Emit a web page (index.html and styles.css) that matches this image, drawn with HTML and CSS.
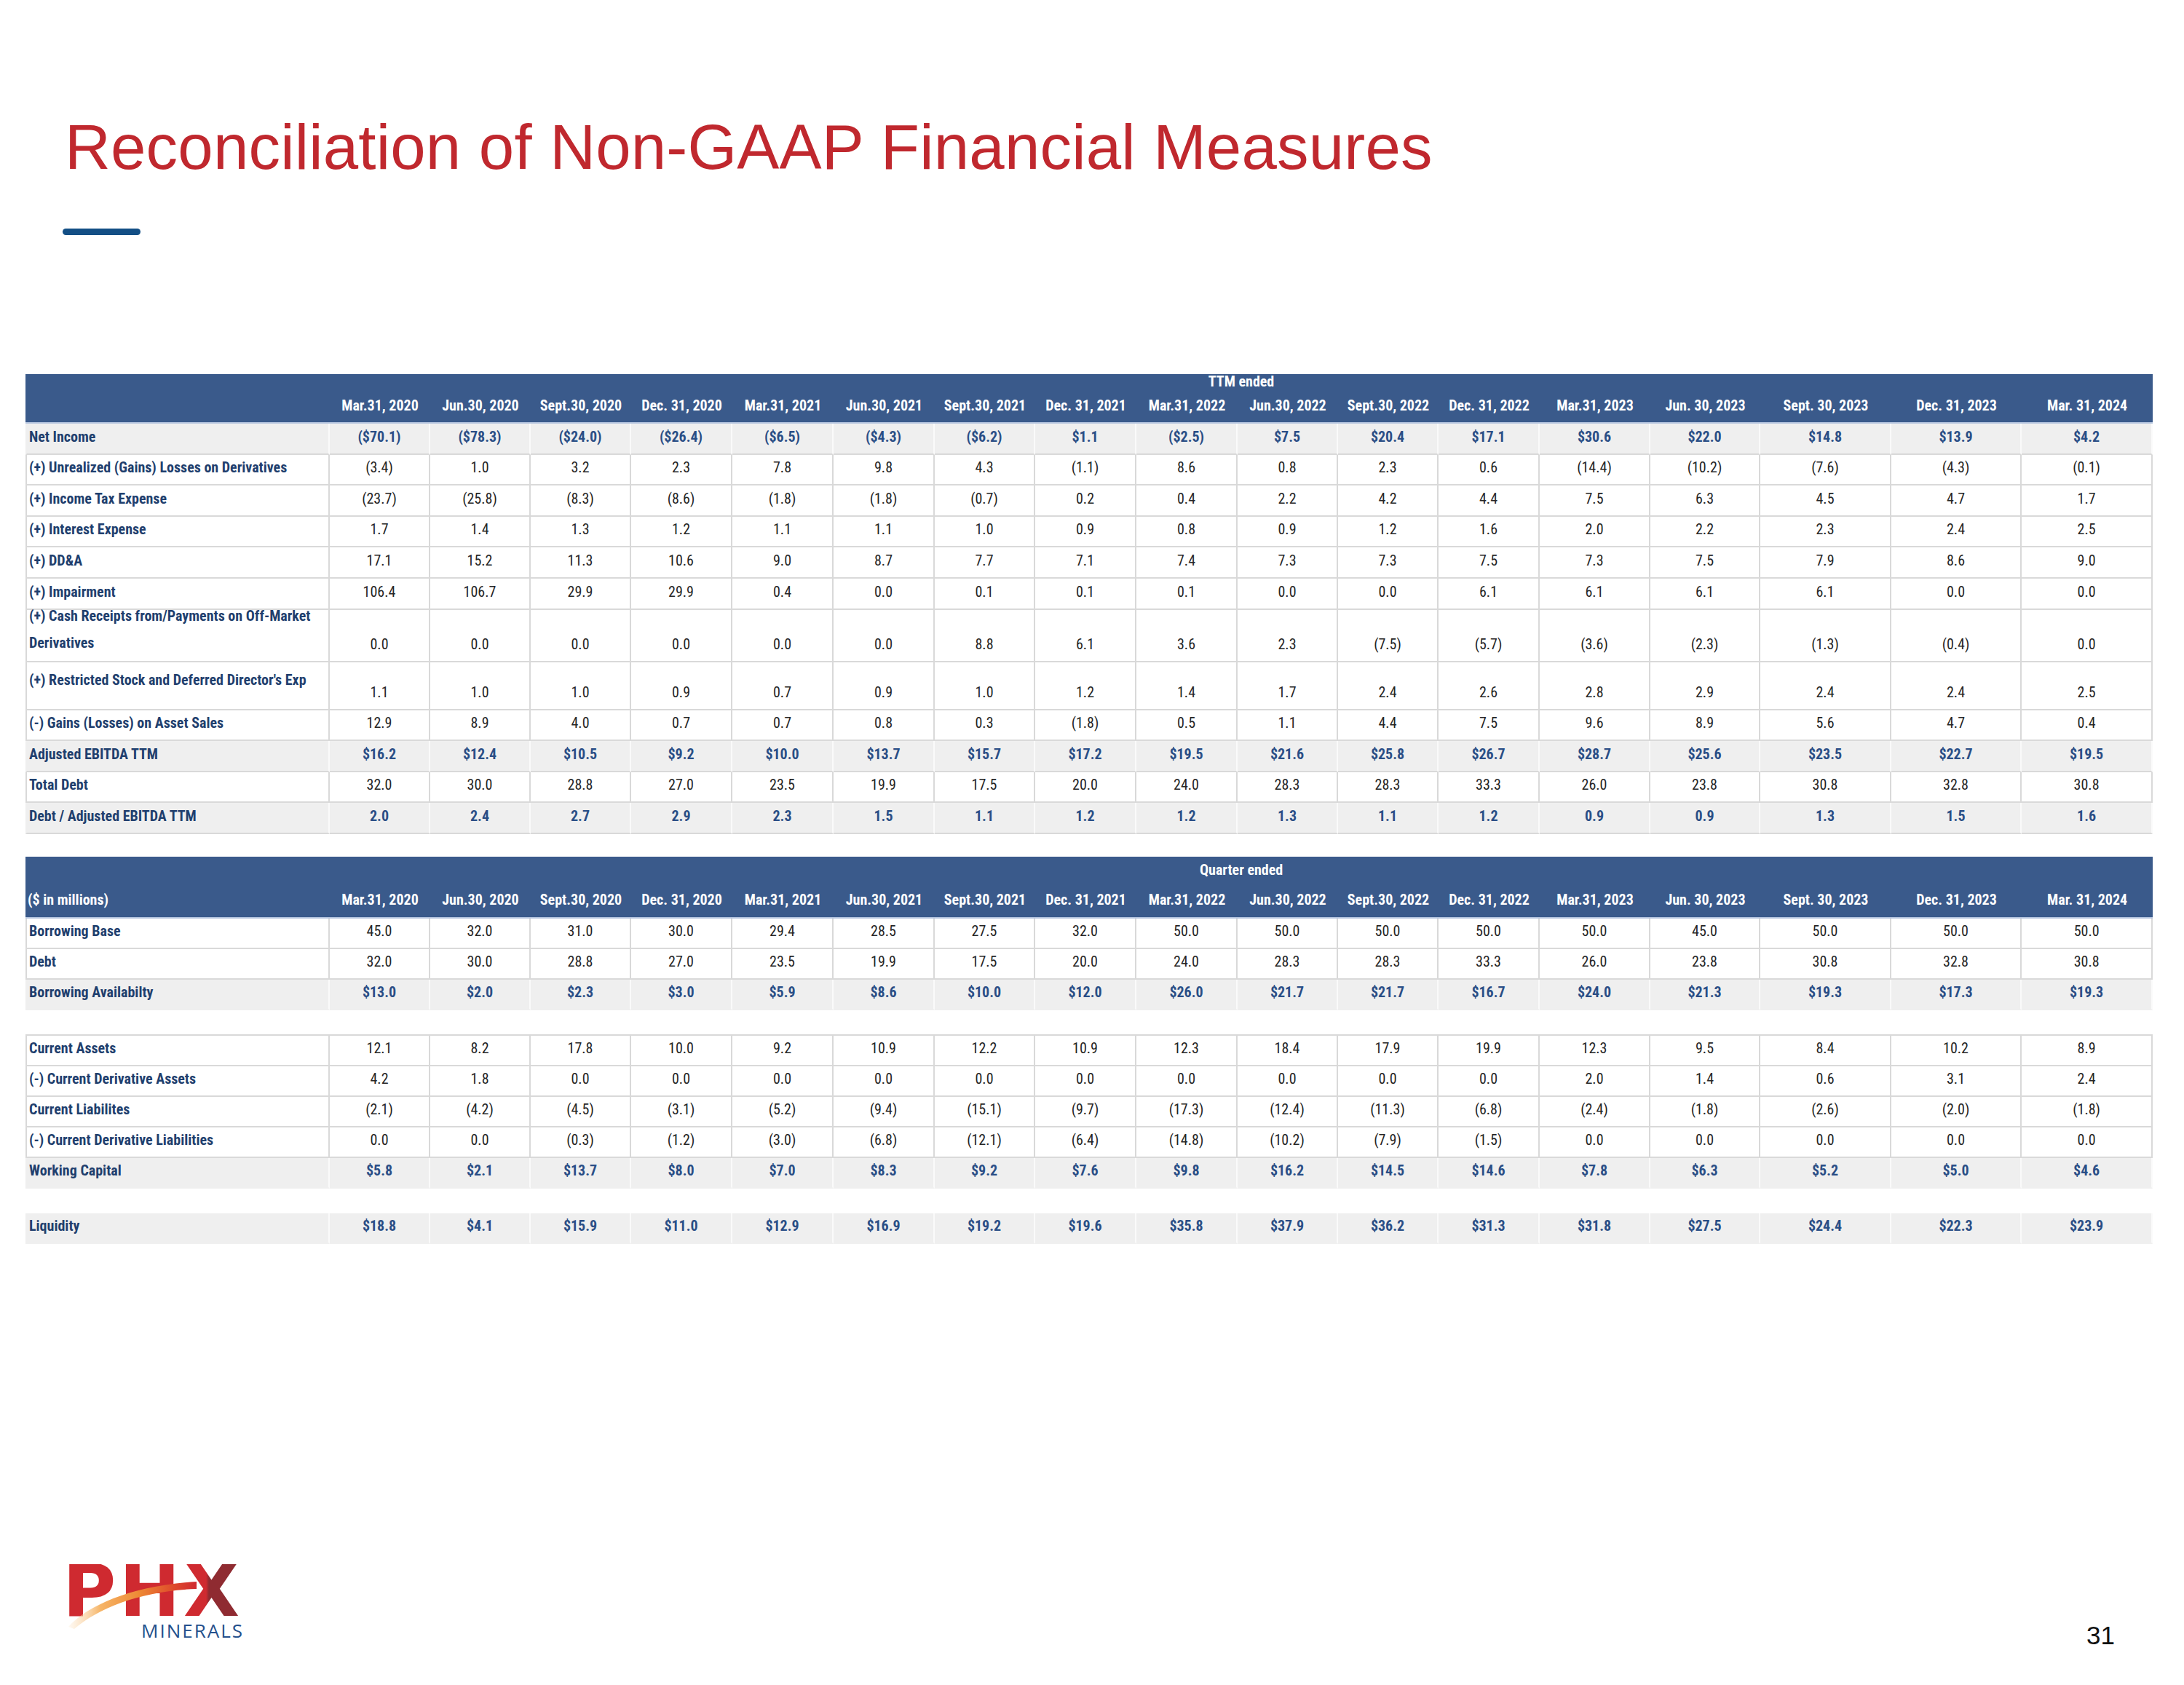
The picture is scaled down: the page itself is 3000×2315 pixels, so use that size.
FILE: index.html
```html
<!DOCTYPE html>
<html lang="en">
<head>
<meta charset="utf-8">
<title>Reconciliation of Non-GAAP Financial Measures</title>
<link rel="stylesheet" href="styles.css">
</head>
<body>
<div class="slide">
  <h1 class="title">Reconciliation of Non-GAAP Financial Measures</h1>
  <div class="rule"></div>

  <div class="tables">
    <table class="fin">
      <colgroup>
        <col class="w-lbl"><col class="w-a"><col class="w-a"><col class="w-a"><col class="w-b"><col class="w-b"><col class="w-b"><col class="w-a"><col class="w-b"><col class="w-b"><col class="w-a"><col class="w-a"><col class="w-b"><col class="w-c"><col class="w-d"><col class="w-e"><col class="w-f"><col class="w-e">
      </colgroup>
      <thead>
        <tr class="h-top t1"><th></th><th colspan="17">TTM ended</th></tr>
        <tr class="h-dates t1"><th></th><th>Mar.31, 2020</th><th>Jun.30, 2020</th><th>Sept.30, 2020</th><th>Dec. 31, 2020</th><th>Mar.31, 2021</th><th>Jun.30, 2021</th><th>Sept.30, 2021</th><th>Dec. 31, 2021</th><th>Mar.31, 2022</th><th>Jun.30, 2022</th><th>Sept.30, 2022</th><th>Dec. 31, 2022</th><th>Mar.31, 2023</th><th>Jun. 30, 2023</th><th>Sept. 30, 2023</th><th>Dec. 31, 2023</th><th>Mar. 31, 2024</th></tr>
      </thead>
      <tbody>
        <tr class="tot"><td class="lbl">Net Income</td><td>($70.1)</td><td>($78.3)</td><td>($24.0)</td><td>($26.4)</td><td>($6.5)</td><td>($4.3)</td><td>($6.2)</td><td>$1.1</td><td>($2.5)</td><td>$7.5</td><td>$20.4</td><td>$17.1</td><td>$30.6</td><td>$22.0</td><td>$14.8</td><td>$13.9</td><td>$4.2</td></tr>
        <tr><td class="lbl">(+) Unrealized (Gains) Losses on Derivatives</td><td>(3.4)</td><td>1.0</td><td>3.2</td><td>2.3</td><td>7.8</td><td>9.8</td><td>4.3</td><td>(1.1)</td><td>8.6</td><td>0.8</td><td>2.3</td><td>0.6</td><td>(14.4)</td><td>(10.2)</td><td>(7.6)</td><td>(4.3)</td><td>(0.1)</td></tr>
        <tr><td class="lbl">(+) Income Tax Expense</td><td>(23.7)</td><td>(25.8)</td><td>(8.3)</td><td>(8.6)</td><td>(1.8)</td><td>(1.8)</td><td>(0.7)</td><td>0.2</td><td>0.4</td><td>2.2</td><td>4.2</td><td>4.4</td><td>7.5</td><td>6.3</td><td>4.5</td><td>4.7</td><td>1.7</td></tr>
        <tr><td class="lbl">(+) Interest Expense</td><td>1.7</td><td>1.4</td><td>1.3</td><td>1.2</td><td>1.1</td><td>1.1</td><td>1.0</td><td>0.9</td><td>0.8</td><td>0.9</td><td>1.2</td><td>1.6</td><td>2.0</td><td>2.2</td><td>2.3</td><td>2.4</td><td>2.5</td></tr>
        <tr><td class="lbl">(+) DD&amp;A</td><td>17.1</td><td>15.2</td><td>11.3</td><td>10.6</td><td>9.0</td><td>8.7</td><td>7.7</td><td>7.1</td><td>7.4</td><td>7.3</td><td>7.3</td><td>7.5</td><td>7.3</td><td>7.5</td><td>7.9</td><td>8.6</td><td>9.0</td></tr>
        <tr><td class="lbl">(+) Impairment</td><td>106.4</td><td>106.7</td><td>29.9</td><td>29.9</td><td>0.4</td><td>0.0</td><td>0.1</td><td>0.1</td><td>0.1</td><td>0.0</td><td>0.0</td><td>6.1</td><td>6.1</td><td>6.1</td><td>6.1</td><td>0.0</td><td>0.0</td></tr>
        <tr class="tall-a"><td class="lbl two-line"><div class="lines">(+) Cash Receipts from/Payments on Off-Market<br>Derivatives</div></td><td>0.0</td><td>0.0</td><td>0.0</td><td>0.0</td><td>0.0</td><td>0.0</td><td>8.8</td><td>6.1</td><td>3.6</td><td>2.3</td><td>(7.5)</td><td>(5.7)</td><td>(3.6)</td><td>(2.3)</td><td>(1.3)</td><td>(0.4)</td><td>0.0</td></tr>
        <tr class="tall-b"><td class="lbl raised">(+) Restricted Stock and Deferred Director's Exp</td><td>1.1</td><td>1.0</td><td>1.0</td><td>0.9</td><td>0.7</td><td>0.9</td><td>1.0</td><td>1.2</td><td>1.4</td><td>1.7</td><td>2.4</td><td>2.6</td><td>2.8</td><td>2.9</td><td>2.4</td><td>2.4</td><td>2.5</td></tr>
        <tr><td class="lbl">(-) Gains (Losses) on Asset Sales</td><td>12.9</td><td>8.9</td><td>4.0</td><td>0.7</td><td>0.7</td><td>0.8</td><td>0.3</td><td>(1.8)</td><td>0.5</td><td>1.1</td><td>4.4</td><td>7.5</td><td>9.6</td><td>8.9</td><td>5.6</td><td>4.7</td><td>0.4</td></tr>
        <tr class="tot"><td class="lbl">Adjusted EBITDA TTM</td><td>$16.2</td><td>$12.4</td><td>$10.5</td><td>$9.2</td><td>$10.0</td><td>$13.7</td><td>$15.7</td><td>$17.2</td><td>$19.5</td><td>$21.6</td><td>$25.8</td><td>$26.7</td><td>$28.7</td><td>$25.6</td><td>$23.5</td><td>$22.7</td><td>$19.5</td></tr>
        <tr><td class="lbl">Total Debt</td><td>32.0</td><td>30.0</td><td>28.8</td><td>27.0</td><td>23.5</td><td>19.9</td><td>17.5</td><td>20.0</td><td>24.0</td><td>28.3</td><td>28.3</td><td>33.3</td><td>26.0</td><td>23.8</td><td>30.8</td><td>32.8</td><td>30.8</td></tr>
        <tr class="tot"><td class="lbl">Debt / Adjusted EBITDA TTM</td><td>2.0</td><td>2.4</td><td>2.7</td><td>2.9</td><td>2.3</td><td>1.5</td><td>1.1</td><td>1.2</td><td>1.2</td><td>1.3</td><td>1.1</td><td>1.2</td><td>0.9</td><td>0.9</td><td>1.3</td><td>1.5</td><td>1.6</td></tr>
      </tbody>
    </table>

    <table class="fin quarter">
      <colgroup>
        <col class="w-lbl"><col class="w-a"><col class="w-a"><col class="w-a"><col class="w-b"><col class="w-b"><col class="w-b"><col class="w-a"><col class="w-b"><col class="w-b"><col class="w-a"><col class="w-a"><col class="w-b"><col class="w-c"><col class="w-d"><col class="w-e"><col class="w-f"><col class="w-e">
      </colgroup>
      <thead>
        <tr class="h-top t2"><th></th><th colspan="17">Quarter ended</th></tr>
        <tr class="h-dates t2"><th class="hl">($ in millions)</th><th>Mar.31, 2020</th><th>Jun.30, 2020</th><th>Sept.30, 2020</th><th>Dec. 31, 2020</th><th>Mar.31, 2021</th><th>Jun.30, 2021</th><th>Sept.30, 2021</th><th>Dec. 31, 2021</th><th>Mar.31, 2022</th><th>Jun.30, 2022</th><th>Sept.30, 2022</th><th>Dec. 31, 2022</th><th>Mar.31, 2023</th><th>Jun. 30, 2023</th><th>Sept. 30, 2023</th><th>Dec. 31, 2023</th><th>Mar. 31, 2024</th></tr>
      </thead>
      <tbody>
        <tr class="q"><td class="lbl">Borrowing Base</td><td>45.0</td><td>32.0</td><td>31.0</td><td>30.0</td><td>29.4</td><td>28.5</td><td>27.5</td><td>32.0</td><td>50.0</td><td>50.0</td><td>50.0</td><td>50.0</td><td>50.0</td><td>45.0</td><td>50.0</td><td>50.0</td><td>50.0</td></tr>
        <tr class="q"><td class="lbl">Debt</td><td>32.0</td><td>30.0</td><td>28.8</td><td>27.0</td><td>23.5</td><td>19.9</td><td>17.5</td><td>20.0</td><td>24.0</td><td>28.3</td><td>28.3</td><td>33.3</td><td>26.0</td><td>23.8</td><td>30.8</td><td>32.8</td><td>30.8</td></tr>
        <tr class="q tot open"><td class="lbl">Borrowing Availabilty</td><td>$13.0</td><td>$2.0</td><td>$2.3</td><td>$3.0</td><td>$5.9</td><td>$8.6</td><td>$10.0</td><td>$12.0</td><td>$26.0</td><td>$21.7</td><td>$21.7</td><td>$16.7</td><td>$24.0</td><td>$21.3</td><td>$19.3</td><td>$17.3</td><td>$19.3</td></tr>
        <tr class="gap ruled"><td colspan="18"></td></tr>
        <tr class="q"><td class="lbl">Current Assets</td><td>12.1</td><td>8.2</td><td>17.8</td><td>10.0</td><td>9.2</td><td>10.9</td><td>12.2</td><td>10.9</td><td>12.3</td><td>18.4</td><td>17.9</td><td>19.9</td><td>12.3</td><td>9.5</td><td>8.4</td><td>10.2</td><td>8.9</td></tr>
        <tr class="q"><td class="lbl">(-) Current Derivative Assets</td><td>4.2</td><td>1.8</td><td>0.0</td><td>0.0</td><td>0.0</td><td>0.0</td><td>0.0</td><td>0.0</td><td>0.0</td><td>0.0</td><td>0.0</td><td>0.0</td><td>2.0</td><td>1.4</td><td>0.6</td><td>3.1</td><td>2.4</td></tr>
        <tr class="q"><td class="lbl">Current Liabilites</td><td>(2.1)</td><td>(4.2)</td><td>(4.5)</td><td>(3.1)</td><td>(5.2)</td><td>(9.4)</td><td>(15.1)</td><td>(9.7)</td><td>(17.3)</td><td>(12.4)</td><td>(11.3)</td><td>(6.8)</td><td>(2.4)</td><td>(1.8)</td><td>(2.6)</td><td>(2.0)</td><td>(1.8)</td></tr>
        <tr class="q"><td class="lbl">(-) Current Derivative Liabilities</td><td>0.0</td><td>0.0</td><td>(0.3)</td><td>(1.2)</td><td>(3.0)</td><td>(6.8)</td><td>(12.1)</td><td>(6.4)</td><td>(14.8)</td><td>(10.2)</td><td>(7.9)</td><td>(1.5)</td><td>0.0</td><td>0.0</td><td>0.0</td><td>0.0</td><td>0.0</td></tr>
        <tr class="q tot open"><td class="lbl">Working Capital</td><td>$5.8</td><td>$2.1</td><td>$13.7</td><td>$8.0</td><td>$7.0</td><td>$8.3</td><td>$9.2</td><td>$7.6</td><td>$9.8</td><td>$16.2</td><td>$14.5</td><td>$14.6</td><td>$7.8</td><td>$6.3</td><td>$5.2</td><td>$5.0</td><td>$4.6</td></tr>
        <tr class="gap"><td colspan="18"></td></tr>
        <tr class="q tot open"><td class="lbl">Liquidity</td><td>$18.8</td><td>$4.1</td><td>$15.9</td><td>$11.0</td><td>$12.9</td><td>$16.9</td><td>$19.2</td><td>$19.6</td><td>$35.8</td><td>$37.9</td><td>$36.2</td><td>$31.3</td><td>$31.8</td><td>$27.5</td><td>$24.4</td><td>$22.3</td><td>$23.9</td></tr>
      </tbody>
    </table>
  </div>

  <div class="footer">
    <div class="logo" aria-label="PHX Minerals">
      <div class="logo-phx">PHX</div>
      <div class="logo-min">MINERALS</div>
      <svg class="logo-swoosh" width="270" height="142" viewBox="0 0 270 142" aria-hidden="true">
        <defs>
          <linearGradient id="swoosh" gradientUnits="userSpaceOnUse" x1="14" y1="0" x2="190" y2="0">
            <stop offset="0" stop-color="#FBE0BC" stop-opacity="0.2"/>
            <stop offset="0.25" stop-color="#F6B567"/>
            <stop offset="0.55" stop-color="#EE8A35"/>
            <stop offset="0.82" stop-color="#DE4A2B"/>
            <stop offset="1" stop-color="#D0292F"/>
          </linearGradient>
        </defs>
        <path d="M14 113 C 42 82, 105 56, 190 51 L 190 61 C 118 63, 56 86, 22 116 Z" fill="url(#swoosh)"/>
      </svg>
    </div>
    <div class="pagenum">31</div>
  </div>
</div>
</body>
</html>
```

FILE: styles.css
```css
html, body {
  margin: 0;
  padding: 0;
  background: #ffffff;
}

.slide {
  width: 3000px;
  height: 2315px;
  box-sizing: border-box;
  padding-top: 152px;
  display: flex;
  flex-direction: column;
  overflow: hidden;
}

.title {
  margin: 0 0 0 89px;
  font-family: "Liberation Sans", Arial, sans-serif;
  font-weight: normal;
  font-size: 87px;
  line-height: 100px;
  letter-spacing: 0.2px;
  color: #C0282E;
  white-space: nowrap;
}

.rule {
  width: 107px;
  height: 9px;
  border-radius: 5px;
  background: #134F85;
  margin: 62px 0 0 86px;
}

.tables {
  margin: 191px 0 0 35px;
  display: flex;
  flex-direction: column;
  gap: 31px;
}

.fin {
  width: 2922px;
  table-layout: fixed;
  border-collapse: separate;
  border-spacing: 0;
  font-family: "Liberation Sans Narrow", "Arial Narrow", "Roboto Condensed", "Liberation Sans", sans-serif;
  font-size: 20px;
}

.w-lbl { width: 418px; }
.w-a { width: 138px; }
.w-b { width: 139px; }
.w-c { width: 152px; }
.w-d { width: 151px; }
.w-e { width: 180px; }
.w-f { width: 179px; }

.fin th {
  background: #3A5A8B;
  color: #ffffff;
  font-weight: bold;
  padding: 0;
  text-align: center;
  vertical-align: middle;
  white-space: nowrap;
  line-height: 20px;
}

.fin th.hl {
  text-align: left;
  padding-left: 3px;
}

.h-top.t1 { height: 18px; }
.h-dates.t1 { height: 48px; }
.h-top.t2 { height: 36px; }
.h-dates.t2 { height: 49px; }

.h-dates th {
  border-bottom: 2px solid #B4C4DE;
}

.fin tbody tr { height: 42.6px; }
.fin tbody tr.q { height: 42px; }
.fin tbody tr.tall-a { height: 72px; }
.fin tbody tr.tall-b { height: 66px; }

.fin td {
  padding: 0 0 11px 0;
  line-height: 24px;
  text-align: center;
  vertical-align: bottom;
  color: #262626;
  white-space: nowrap;
  border-right: 2px solid #D9D9D9;
  border-bottom: 2px solid #D9D9D9;
}

.fin td.lbl {
  text-align: left;
  padding-left: 3px;
  color: #1F3F6E;
  font-weight: bold;
  border-left: 2px solid #D9D9D9;
}

.fin td.two-line {
  vertical-align: top;
  padding-bottom: 0;
}

.fin td.two-line .lines {
  line-height: 37px;
  margin: -10px 0 -12px;
}

.fin td.raised {
  vertical-align: top;
  padding-top: 12px;
  padding-bottom: 0;
}

.fin tr.tot td {
  background: #EFEFEF;
  font-weight: bold;
  color: #2A4E86;
  border-right-color: #FAFAFA;
}

.fin tr.tot td.lbl {
  color: #1F3F6E;
  border-left-color: #EFEFEF;
}

.fin tr.tot.open td {
  border-bottom-color: #EFEFEF;
}

.fin tr.gap { height: 34px; }
.fin tr.gap.ruled { height: 35px; }

.fin tr.gap td {
  padding: 0;
  background: transparent;
  border: none;
}

.fin tr.gap.ruled td {
  border-bottom: 2px solid #D9D9D9;
}

.footer {
  margin-top: auto;
  display: flex;
  justify-content: space-between;
  align-items: flex-start;
  padding: 0 95px 48px 80px;
}

.logo {
  position: relative;
  width: 270px;
  height: 142px;
  box-sizing: border-box;
  padding-top: 27px;
}

.logo-phx {
  display: inline-block;
  vertical-align: top;
  margin-left: 6px;
  font-family: "DejaVu Sans", sans-serif;
  font-weight: bold;
  font-size: 100px;
  line-height: 73px;
  letter-spacing: 4.5px;
  color: transparent;
  background: linear-gradient(90deg, #CF2A30 0, #CF2A30 197px, #8F2B31 201px, #8F2B31 100%);
  -webkit-background-clip: text;
  background-clip: text;
}

.logo-min {
  margin: 8px 0 0 114px;
  font-family: "Open Sans", "Liberation Sans", sans-serif;
  font-size: 26px;
  line-height: 20px;
  letter-spacing: 2px;
  color: #24508C;
  white-space: nowrap;
}

.logo-swoosh {
  position: absolute;
  left: 0;
  top: 0;
  pointer-events: none;
}

.pagenum {
  margin-top: 105px;
  font-family: "Liberation Sans", Arial, sans-serif;
  font-size: 35px;
  line-height: 40px;
  color: #111111;
}
```
